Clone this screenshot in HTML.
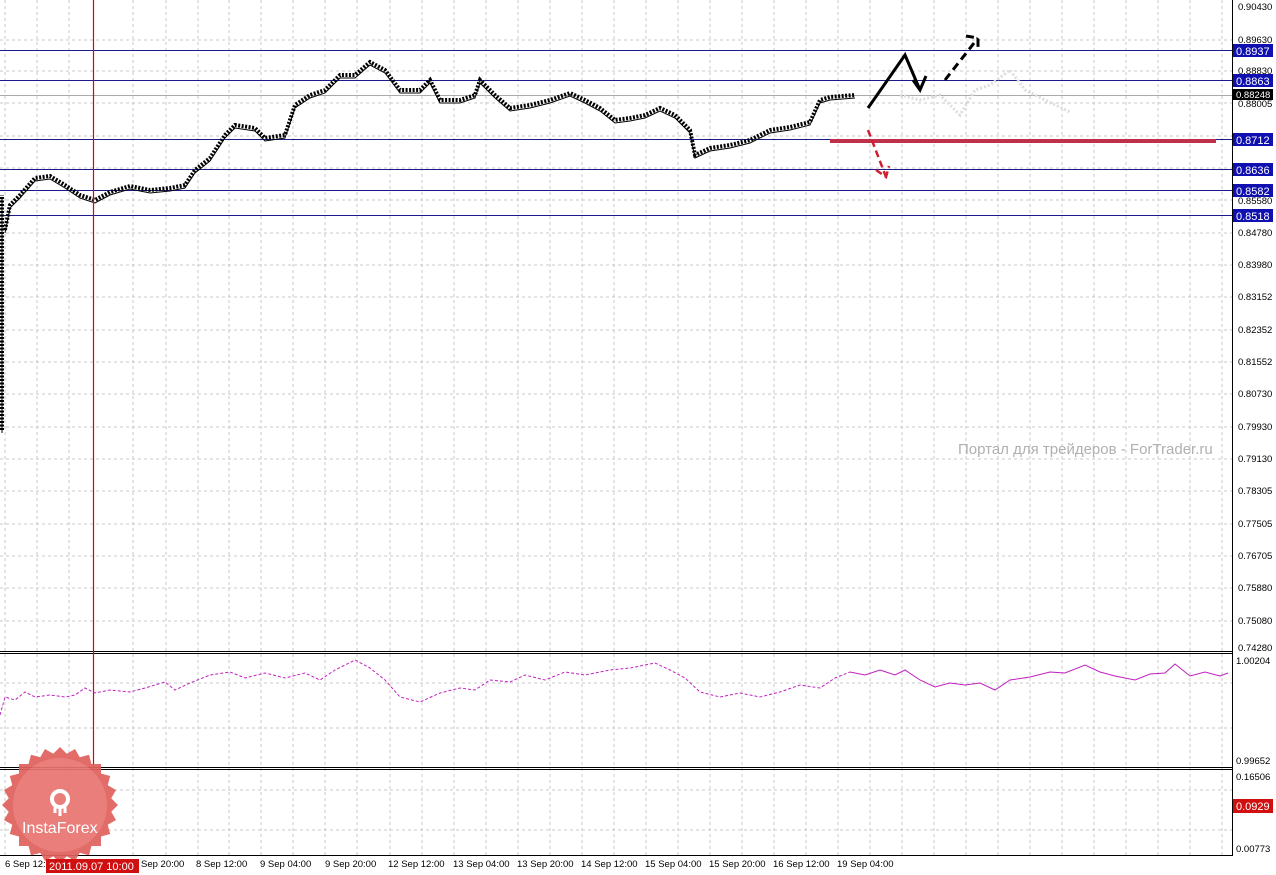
<!DOCTYPE html>
<html><head><meta charset="utf-8"><style>
body{margin:0;width:1276px;height:875px;background:#fff;overflow:hidden;font-family:"Liberation Sans",sans-serif}
svg{position:absolute;left:0;top:0}
text{font-family:"Liberation Sans",sans-serif;font-size:9.5px;fill:#000}
</style></head><body>
<svg width="1276" height="875" xmlns="http://www.w3.org/2000/svg">
<rect width="1276" height="875" fill="#fff"/>
<g stroke="#c8c8c8" stroke-dasharray="3,3" stroke-width="1">
<path d="M5 0V855M37 0V855M69 0V855M133 0V855M166 0V855M198 0V855M229 0V855M261 0V855M293 0V855M325 0V855M357 0V855M390 0V855M422 0V855M454 0V855M486 0V855M518 0V855M550 0V855M582 0V855M614 0V855M646 0V855M678 0V855M710 0V855M742 0V855M774 0V855M806 0V855M838 0V855M870 0V855M902 0V855M934 0V855M966 0V855M998 0V855M1030 0V855M1062 0V855M1094 0V855M1126 0V855M1158 0V855M1190 0V855M1222 0V855"/>
<path d="M0 40H1232M0 71H1232M0 103H1232M0 136H1232M0 168H1232M0 200H1232M0 233H1232M0 265H1232M0 297H1232M0 330H1232M0 362H1232M0 394H1232M0 427H1232M0 459H1232M0 491H1232M0 524H1232M0 556H1232M0 588H1232M0 621H1232M0 683H1232M0 728H1232M0 790H1232M0 830H1232"/>
</g>
<g stroke="#000" stroke-width="1" fill="none">
<path d="M1232.5 0V855M0 651.5H1233M0 653.5H1233M0 767.5H1233M0 769.5H1233M0 855.5H1233"/>
</g>
<g stroke="#1a1a8a" stroke-width="1">
<path d="M0 50.5H1232M0 80.5H1232M0 139.5H1232M0 169.5H1232M0 190.5H1232M0 215.5H1232"/>
</g>
<path d="M0 95.5H1232" stroke="#aaa"/>
<path d="M830 141H1216" stroke="#c0304a" stroke-width="4"/>
<path d="M2 430V195M5 230L10 205 20 195 35 178 50 176 65 185 80 195 95 200 110 192 130 186 150 190 170 188 185 185 195 170 210 158 225 135 235 125 255 128 265 138 285 135 295 105 310 95 325 90 340 75 355 75 370 62 385 70 400 90 420 90 430 80 440 100 460 100 475 95 480 80 495 95 510 108 530 105 550 100 570 93 585 100 600 108 615 120 630 118 645 115 660 108 675 115 690 130 695 155 710 148 730 145 750 140 770 130 790 127 810 122 820 100 830 97 855 95" fill="none" stroke="#000" stroke-width="4" stroke-dasharray="2,1.5"/>
<path d="M2 430V195M5 230L10 205 20 195 35 178 50 176 65 185 80 195 95 200 110 192 130 186 150 190 170 188 185 185 195 170 210 158 225 135 235 125 255 128 265 138 285 135 295 105 310 95 325 90 340 75 355 75 370 62 385 70 400 90 420 90 430 80 440 100 460 100 475 95 480 80 495 95 510 108 530 105 550 100 570 93 585 100 600 108 615 120 630 118 645 115 660 108 675 115 690 130 695 155 710 148 730 145 750 140 770 130 790 127 810 122 820 100 830 97 855 95" fill="none" stroke="#000" stroke-width="1" transform="translate(0,3)"/>
<path d="M900 95L920 100 940 95 960 115 975 90 990 85 1010 70 1025 90 1045 100 1070 112" fill="none" stroke="#ddd" stroke-width="3" stroke-dasharray="2,2"/>
<path d="M93.5 0V768" stroke="#e00000" stroke-width="1.2"/>
<path d="M868 108L905 55 920 90M913 80L920 90 926 76" fill="none" stroke="#000" stroke-width="3"/>
<path d="M945 80L978 38M966 36L978 38 978 50" fill="none" stroke="#000" stroke-width="3" stroke-dasharray="8,5"/>
<path d="M868 130L886 177M876 170L886 177 889 166" fill="none" stroke="#d02030" stroke-width="2.5" stroke-dasharray="7,4"/>
<path d="M0 715L5 697 15 700 25 692 35 697 50 695 65 697 75 695 85 688 95 693 110 690 130 692 145 688 165 682 175 690 190 683 210 675 230 672 245 678 265 673 285 678 305 673 320 680 335 670 355 660 370 668 385 680 400 697 420 702 440 693 460 688 475 690 490 680 510 682 525 675 545 680 565 672 585 675 610 670 630 668 655 663 670 670 685 678 700 692 720 697 740 693 760 697 780 692 800 685 820 688 835 678 850 672" fill="none" stroke="#c020c0" stroke-width="1" stroke-dasharray="3,2"/>
<path d="M850 672L865 675 880 670 895 675 905 670 920 680 935 687 950 683 965 685 980 683 995 690 1010 680 1030 677 1050 672 1065 673 1085 665 1100 672 1115 676 1135 680 1150 674 1165 673 1175 664 1190 676 1205 672 1220 676 1228 673" fill="none" stroke="#c020c0" stroke-width="1"/>
<g fill="#000">
<text x="1238" y="10">0.90430</text><text x="1238" y="43">0.89630</text><text x="1238" y="74">0.88830</text><text x="1238" y="107">0.88005</text><text x="1238" y="204">0.85580</text><text x="1238" y="236">0.84780</text><text x="1238" y="268">0.83980</text><text x="1238" y="300">0.83152</text><text x="1238" y="333">0.82352</text><text x="1238" y="365">0.81552</text><text x="1238" y="397">0.80730</text><text x="1238" y="430">0.79930</text><text x="1238" y="462">0.79130</text><text x="1238" y="494">0.78305</text><text x="1238" y="527">0.77505</text><text x="1238" y="559">0.76705</text><text x="1238" y="591">0.75880</text><text x="1238" y="624">0.75080</text><text x="1238" y="651">0.74280</text><text x="1236" y="664">1.00204</text><text x="1236" y="764">0.99652</text><text x="1236" y="780">0.16506</text><text x="1236" y="852">0.00773</text>
</g>
<g>
<rect x="1233" y="44" width="40" height="13" fill="#1010b0"/><text x="1236" y="55" style="fill:#fff;font-size:11px">0.8937</text>
<rect x="1233" y="74" width="40" height="13" fill="#1010b0"/><text x="1236" y="85" style="fill:#fff;font-size:11px">0.8863</text>
<rect x="1233" y="89" width="40" height="11" fill="#000"/><text x="1236" y="98" style="fill:#fff">0.88248</text>
<rect x="1233" y="133" width="40" height="13" fill="#1010b0"/><text x="1236" y="144" style="fill:#fff;font-size:11px">0.8712</text>
<rect x="1233" y="163" width="40" height="13" fill="#1010b0"/><text x="1236" y="174" style="fill:#fff;font-size:11px">0.8636</text>
<rect x="1233" y="184" width="40" height="13" fill="#1010b0"/><text x="1236" y="195" style="fill:#fff;font-size:11px">0.8582</text>
<rect x="1233" y="209" width="40" height="13" fill="#1010b0"/><text x="1236" y="220" style="fill:#fff;font-size:11px">0.8518</text>
<rect x="1233" y="799" width="40" height="14" fill="#d01010"/><text x="1236" y="810" style="fill:#fff;font-size:11px">0.0929</text>
</g>
<text x="958" y="454" style="font-size:15px;fill:#b0b0b0">Портал для трейдеров - ForTrader.ru</text>
<g fill="#000">
<text x="5" y="867">6 Sep 12:</text><text x="141" y="867">Sep 20:00</text><text x="196" y="867">8 Sep 12:00</text><text x="260" y="867">9 Sep 04:00</text><text x="325" y="867">9 Sep 20:00</text><text x="388" y="867">12 Sep 12:00</text><text x="453" y="867">13 Sep 04:00</text><text x="517" y="867">13 Sep 20:00</text><text x="581" y="867">14 Sep 12:00</text><text x="645" y="867">15 Sep 04:00</text><text x="709" y="867">15 Sep 20:00</text><text x="773" y="867">16 Sep 12:00</text><text x="837" y="867">19 Sep 04:00</text>
</g>
<g transform="translate(60,805)" fill="#e0605c" opacity="0.92">
<rect x="-41" y="-41" width="82" height="82"/>
<rect x="-41" y="-41" width="82" height="82" transform="rotate(15)"/>
<rect x="-41" y="-41" width="82" height="82" transform="rotate(30)"/>
<rect x="-41" y="-41" width="82" height="82" transform="rotate(45)"/>
<rect x="-41" y="-41" width="82" height="82" transform="rotate(60)"/>
<rect x="-41" y="-41" width="82" height="82" transform="rotate(75)"/>
<circle r="47" fill="#e87470"/>
</g>
<g fill="none" stroke="#fff" stroke-width="4">
<circle cx="60" cy="799" r="8"/>
<path d="M60 807V816M55 806V813M65 806V813" stroke-width="3"/>
</g>
<text x="22" y="833" style="fill:#fff;font-size:16px">InstaForex</text>
<rect x="46" y="859" width="93" height="14" fill="#d01010"/>
<text x="49" y="870" style="fill:#fff;font-size:11px">2011.09.07 10:00</text>
</svg>
</body></html>
